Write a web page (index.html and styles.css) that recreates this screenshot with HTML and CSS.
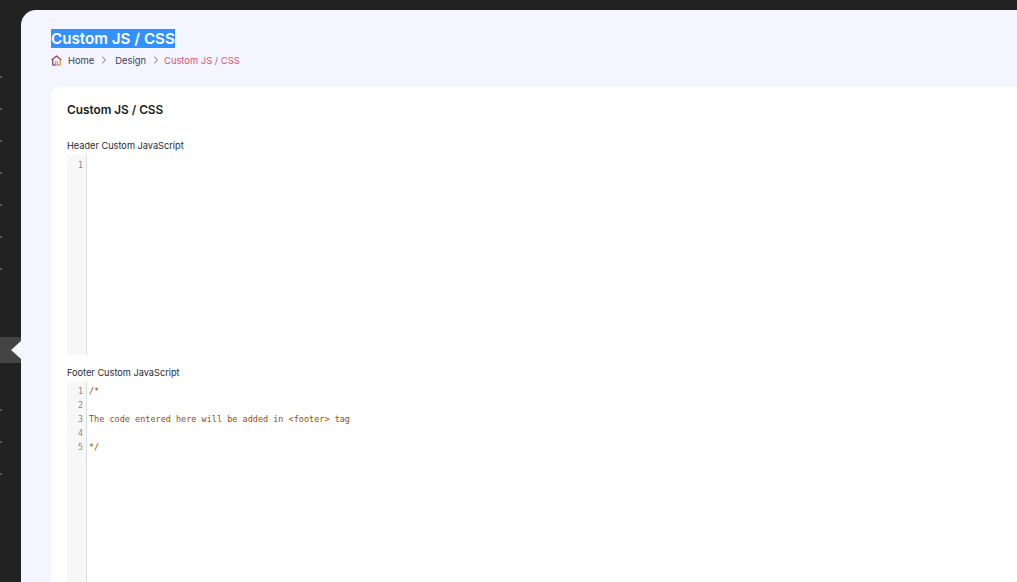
FILE: index.html
```html
<!DOCTYPE html>
<html lang="en">
<head>
<meta charset="utf-8">
<title>Custom JS / CSS</title>
<link rel="stylesheet" href="styles.css">
</head>
<body>
<div class="app">
  <aside class="rail">
    <div class="ticks top"><i></i><i></i><i></i><i></i><i></i><i></i><i></i></div>
    <div class="active"><span class="notch"></span></div>
    <div class="ticks bottom"><i></i><i></i><i></i></div>
  </aside>
  <main class="main">
    <header class="head">
      <h1 class="title"><span class="sel">Custom JS / CSS</span></h1>
      <nav class="crumbs">
        <svg class="home" width="11" height="11" viewBox="0 0 11 11" fill="none">
          <path d="M.6 5 5.5 1l4.9 4" stroke="#a8324a" stroke-width="1.1"/>
          <path d="M1.8 4.5V10H5" stroke="#5b1f96" stroke-width="1.1"/>
          <path d="M5 10h4.2V4.5" stroke="#d9822b" stroke-width="1.1"/>
          <path d="M4.5 10V6.8h2V10" stroke="#e0962f" stroke-width="1"/>
        </svg>
        <a class="crumb">Home</a>
        <svg class="chev" width="6" height="8" viewBox="0 0 6 8" fill="none"><path d="M1.2 .8 4.6 4 1.2 7.2" stroke="#6b7280"/></svg>
        <a class="crumb">Design</a>
        <svg class="chev tight" width="6" height="8" viewBox="0 0 6 8" fill="none"><path d="M1.2 .8 4.6 4 1.2 7.2" stroke="#6b7280"/></svg>
        <span class="crumb current">Custom JS / CSS</span>
      </nav>
    </header>
    <section class="card">
      <h2 class="card-title">Custom JS / CSS</h2>
      <label class="label first">Header Custom JavaScript</label>
      <div class="editor short">
        <div class="gutter"><span>1</span></div>
        <div class="code"></div>
      </div>
      <label class="label second">Footer Custom JavaScript</label>
      <div class="editor">
        <div class="gutter"><span>1</span><span>2</span><span>3</span><span>4</span><span>5</span></div>
        <div class="code">
          <div class="line">/*</div>
          <div class="line">&nbsp;</div>
          <div class="line">The code entered here will be added in &lt;footer&gt; tag</div>
          <div class="line">&nbsp;</div>
          <div class="line">*/</div>
        </div>
      </div>
    </section>
  </main>
</div>
</body>
</html>
```
FILE: styles.css
```css
* { box-sizing: border-box; }
html, body { margin: 0; height: 100%; overflow: hidden; }
body { background: #222222; font-family: Inter, "Liberation Sans", sans-serif; }
.app { display: flex; height: 582px; padding-top: 10px; }
.rail { width: 21px; flex: none; display: flex; flex-direction: column; }
.ticks { display: flex; flex-direction: column; gap: 30px; }
.ticks i { display: block; width: 2px; height: 2px; background: #555; }
.ticks.top { padding-top: 66px; }
.active { margin-top: 67px; height: 26px; background: #444444; display: flex; justify-content: flex-end; align-items: center; }
.notch { width: 0; height: 0; border-top: 9px solid transparent; border-bottom: 9px solid transparent; border-right: 10px solid #f4f5ff; }
.ticks.bottom { padding-top: 46px; }
.main { flex: 1; min-width: 0; background: #f4f5ff; border-radius: 15px 0 0 0; padding: 0 0 0 30px; overflow: hidden; }
.head { height: 77px; padding-top: 19px; }
.title { margin: 0; font-size: 15.2px; line-height: 19px; font-weight: 600; color: #fff; }
.sel { background: #3390ff; display: inline-block; }
.crumbs { display: flex; align-items: center; height: 14px; margin-top: 5px; font-size: 9.4px; color: #374151; }
.home { flex: none; margin-right: 6px; }
.crumb { white-space: nowrap; }
.chev { flex: none; margin: 0 8px 0 7px; }
.chev.tight { margin-right: 5px; }
.current { color: #d0566c; }
.card { background: #fff; border-radius: 8px 0 0 0; padding: 16px 16px 0; height: 500px; }
.card-title { margin: 0; font-size: 11.8px; line-height: 15px; font-weight: 600; color: #1a1a1a; }
.label { display: block; font-size: 9.2px; line-height: 12px; color: #1f2937; }
.label.first { margin-top: 22px; }
.label.second { margin-top: 12px; }
.editor { display: flex; margin-top: 3px; height: 300px; }
.editor.short { height: 200px; }
.gutter { width: 20px; flex: none; background: #f7f7f7; border-right: 1px solid #ddd; display: flex; flex-direction: column; padding-top: 2px; font-family: "DejaVu Sans Mono", monospace; font-size: 8.2px; line-height: 14px; color: #888; text-align: right; }
.editor.short .gutter { padding-top: 3px; }
.gutter span { padding-right: 3px; }
.code { flex: 1; padding: 2px 0 0 2px; font-family: "DejaVu Sans Mono", monospace; font-size: 8.5px; line-height: 14px; color: #9a4d00; }
.line { white-space: pre; }
```
